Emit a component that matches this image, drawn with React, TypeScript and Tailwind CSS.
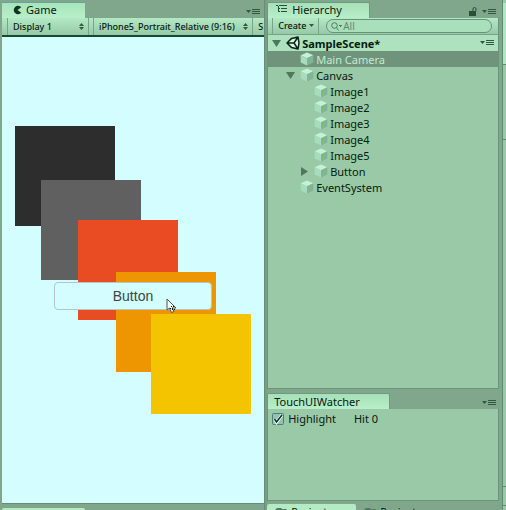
import React from "react";

const squares = [
  "left-[13px] top-[89px] bg-[#2d2d2d]",
  "left-[39px] top-[143px] bg-[#606060]",
  "left-[76px] top-[183px] bg-[#e94b22]",
  "left-[114px] top-[235px] bg-[#ee9502]",
  "left-[149px] top-[277px] bg-[#f5c400]",
];

function MenuIcon() {
  return (
    <svg width="14" height="8" viewBox="0 0 14 8" fill="#2f5a42" aria-hidden="true">
      <path d="M0 2h5L2.500 5zM6 1h8v1H6zM6 3h8v1H6zM6 5h8v1H6z" />
    </svg>
  );
}

function PaneMenu({ label }: { label: string }) {
  return (
    <button type="button" aria-label={label} className="flex h-2 w-3.5 items-center">
      <MenuIcon />
    </button>
  );
}

function GameIcon() {
  return (
    <svg width="9" height="10" viewBox="0 0 9 10" aria-hidden="true">
      <path d="M8.300 2.200A4.300 4.300 0 1 0 8.300 7.800L4.500 5z" fill="#12351f" />
    </svg>
  );
}

function HierarchyIcon() {
  return (
    <svg width="11" height="9" viewBox="0 0 11 9" fill="#24513a" aria-hidden="true">
      <path d="M0 0h2v1H0zM3 0h8v1H3zM2 3h2v1H2zM5 3h6v1H5zM2 6h2v1H2zM5 6h6v1H5zM2 1h1v6H2z" />
    </svg>
  );
}

function FolderIcon() {
  return (
    <svg width="12" height="10" viewBox="0 0 12 10" fill="#4f7c60" className="mt-1 shrink-0" aria-hidden="true">
      <path d="M0 2 2 0h4l1 1h4l1 1v8H0z" />
    </svg>
  );
}

function Cube() {
  return (
    <svg width="14" height="14" viewBox="0 0 14 14" className="shrink-0" aria-hidden="true">
      <path d="M7 .5 13.300 3.200 7 6.300.7 3.200z" fill="#c5f2d6" />
      <path d="M.7 3.200 7 6.300v7.200L.7 10.500z" fill="#a9dcbb" />
      <path d="M13.300 3.200 7 6.300v7.200l6.300-3z" fill="#80b593" />
    </svg>
  );
}

function UnityLogo() {
  return (
    <svg width="14" height="14" viewBox="0 0 14 14" className="shrink-0" aria-hidden="true">
      <path
        d="M12 .9 5.600 2.400 1 7l4.600 4.600L12 13.100 13 7zM1 7h7M8 7l4-6M8 7l4 6"
        fill="#d6f5e0"
        stroke="#092516"
        strokeWidth="1.500"
        strokeLinejoin="round"
      />
    </svg>
  );
}

function Arrow({ open }: { open: boolean }) {
  return (
    <svg width="9" height="9" viewBox="0 0 9 9" fill="#50775e" aria-hidden="true">
      <path d={open ? "M0 1h9L4.500 8z" : "M1 0v9l7-4.500z"} />
    </svg>
  );
}

function UpDown() {
  return (
    <svg width="5" height="7" viewBox="0 0 5 7" fill="#315a43" className="pointer-events-none absolute right-1 top-[5px]" aria-hidden="true">
      <path d="M0 3 2.500 0 5 3zM0 4h5L2.500 7z" />
    </svg>
  );
}

function Tree({ name, level, arrow, selected }: { name: string; level: number; arrow?: "open" | "closed"; selected?: boolean }) {
  return (
    <li className={`flex h-4 items-center ${level === 2 ? "pl-8" : "pl-[18px]"} ${selected ? "bg-[#6f947b] text-[#c3ead0]" : ""}`}>
      <span className="flex w-3.5 shrink-0">
        {arrow && (
          <button type="button" aria-label={`Toggle ${name}`} className="flex">
            <Arrow open={arrow === "open"} />
          </button>
        )}
      </span>
      <Cube />
      <span className="ml-0.5 pt-0.5">{name}</span>
    </li>
  );
}

const tab = "flex h-4 items-center rounded-t-xs border-x border-t border-[#6f9a7d] bg-linear-to-b from-[#a6dfb8] to-[#b8efca]";
const bar = "flex bg-linear-to-b from-[#b4e9c5] to-[#97c9a7]";

function GamePane() {
  return (
    <section aria-label="Game" className="flex min-w-0 flex-1 flex-col">
      <div className="flex h-[18px] shrink-0 items-end justify-between pr-1">
        <h2 className="flex h-4 w-[83px] items-center gap-1 border-t border-[#6d9fa4] bg-linear-to-b from-[#a6e5ba] to-[#b8efca] pb-0.5 pl-[11px]">
          <GameIcon />
          Game
        </h2>
        <div className="mb-0.5">
          <PaneMenu label="Game pane menu" />
        </div>
      </div>
      <div className={`${bar} h-[19px] shrink-0 border-b-2 border-[#164832] pl-[5px] text-[9px] font-medium`}>
        <div className="relative w-[82px] shrink-0 border-x border-[#78a587]">
          <select aria-label="Display" className="h-full w-full appearance-none bg-transparent pl-[5px] outline-none">
            <option>Display 1</option>
          </select>
          <UpDown />
        </div>
        <div className="relative ml-1 min-w-0 flex-1 border-x border-[#78a587]">
          <select aria-label="Aspect ratio" className="h-full w-full appearance-none bg-transparent pl-[5px] outline-none">
            <option>iPhone5_Portrait_Relative (9:16)</option>
          </select>
          <UpDown />
        </div>
        <div className="w-[11px] shrink-0 overflow-hidden pl-[5px] leading-[17px]">S</div>
      </div>
      <div className="relative flex-1 overflow-hidden border-b border-[#678e75] bg-[#d3fdfe]">
        {squares.map((place) => (
          <div key={place} className={`absolute size-[100px] ${place}`} />
        ))}
        <button
          type="button"
          className="absolute left-[52px] top-[245px] h-7 w-[158px] rounded-sm border border-[#b5c5c3] bg-[#d3fdfe] font-['Liberation_Sans',sans-serif] text-sm text-[#3c4645]"
        >
          Button
        </button>
        <svg width="11" height="16" viewBox="0 0 11 16" className="absolute left-[164px] top-[261px]" aria-hidden="true">
          <path d="M1 1v11l2.500-2 2 4.500 2.500-1L6 10h4z" fill="#f5fbfa" stroke="#4b5452" />
          <path d="M5 8h1v1H5zM7 8h1v1H7zM4 10h1v1H4zM6 10h1v2H6zM8 11h1v1H8z" fill="#111" />
        </svg>
      </div>
      <div className="flex h-1.5 shrink-0 items-end">
        <div className="h-0.5 w-[83px] rounded-t-xs bg-[#b4ebc5]" />
      </div>
    </section>
  );
}

function HierarchyPane() {
  return (
    <section aria-label="Hierarchy" className="flex min-h-0 flex-1 flex-col">
      <div className="flex h-[18px] shrink-0 items-end justify-between pr-[3px]">
        <h2 className={`${tab} w-[103px] gap-[5px] pb-0.5 pl-2`}>
          <HierarchyIcon />
          Hierarchy
        </h2>
        <div className="mb-0.5 flex items-center gap-1">
          <svg width="9" height="9" viewBox="0 0 9 9" aria-hidden="true">
            <path d="M0 4h7v5H0z" fill="#294f38" />
            <path d="M4 4V2a1.500 1.500 0 0 1 3 0v2" fill="none" stroke="#294f38" />
          </svg>
          <PaneMenu label="Hierarchy pane menu" />
        </div>
      </div>
      <div className="flex flex-1 flex-col border border-t-0 border-[#6b957a] bg-[#99c9a7]">
        <div className={`${bar} h-[17px] shrink-0 border-b border-[#77a487] pl-1`}>
          <button type="button" className="flex w-[47px] items-center justify-between border-x border-[#78a587] pl-[5px] pr-1 text-[9px] font-medium">
            Create
            <svg width="5" height="4" viewBox="0 0 5 4" fill="#315a43" aria-hidden="true"><path d="M0 0h5L2.500 3z" /></svg>
          </button>
          <label className="my-px ml-[7px] mr-1.5 flex min-w-0 flex-1 items-center rounded-full border border-[#66937a] bg-[#aadfbc] pl-1">
            <svg width="12" height="9" viewBox="0 0 12 9" className="shrink-0" fill="none" stroke="#4c7a5e" aria-hidden="true">
              <circle cx="3.500" cy="3.500" r="2.800" />
              <path d="m5.500 5.500 2 3M8 3.500h3M9 4.500h1" />
            </svg>
            <input aria-label="Search hierarchy" placeholder="All" className="w-full min-w-0 bg-transparent text-[10px] leading-3 outline-none placeholder:text-[#638a70]" />
          </label>
        </div>
        <div className="flex h-4 shrink-0 items-center bg-[#aee2bf] pl-1 pr-1 font-bold">
          <button type="button" aria-label="Toggle SampleScene" className="mr-[5px] flex"><Arrow open /></button>
          <UnityLogo />
          <span className="ml-0.5 flex-1 pt-0.5 text-[#04200f]">SampleScene*</span>
          <PaneMenu label="Scene menu" />
        </div>
        <ul>
          <Tree name="Main Camera" level={1} selected />
          <Tree name="Canvas" level={1} arrow="open" />
          <Tree name="Image1" level={2} />
          <Tree name="Image2" level={2} />
          <Tree name="Image3" level={2} />
          <Tree name="Image4" level={2} />
          <Tree name="Image5" level={2} />
          <Tree name="Button" level={2} arrow="closed" />
          <Tree name="EventSystem" level={1} />
        </ul>
      </div>
    </section>
  );
}

function WatcherPane() {
  return (
    <section aria-label="TouchUIWatcher" className="flex shrink-0 flex-col">
      <div className="flex h-5 items-end justify-between pr-[3px]">
        <h2 className={`${tab} w-[123px] pl-1.5`}>TouchUIWatcher</h2>
        <div className="mb-0.5">
          <PaneMenu label="TouchUIWatcher pane menu" />
        </div>
      </div>
      <div className="flex h-[92px] items-start border border-t-0 border-[#6b957a] bg-[#99c9a7] pl-1 pt-0.5">
        <label className="flex h-4 items-center gap-1">
          <input type="checkbox" defaultChecked className="peer sr-only" />
          <svg width="12" height="12" viewBox="0 0 12 12" aria-hidden="true">
            <rect x=".5" y=".5" width="11" height="11" rx="1" fill="#8fc2b7" stroke="#507e6c" />
            <path d="m2.500 6 2 3.500L10 2" fill="none" stroke="#e5fff3" strokeWidth="3" />
            <path d="m2.500 6 2 3L10 2" fill="none" stroke="#102c20" strokeWidth="1.500" />
          </svg>
          Highlight
        </label>
        <output className="ml-[18px] leading-4">Hit 0</output>
      </div>
    </section>
  );
}

export default function App() {
  return (
    <main className="flex h-screen overflow-hidden bg-[#80a68b] pl-0.5 font-['Noto_Sans',sans-serif] text-[11px] leading-4 text-[#04200f]">
      <GamePane />
      <div className="w-[3px] shrink-0 border-l border-[#678e75] bg-[#789e84]" />
      <div className="flex min-w-0 flex-[0_0_46%] flex-col">
        <HierarchyPane />
        <WatcherPane />
        <div className="mt-[3px] flex h-1.5 shrink-0 overflow-hidden">
          <div className="flex h-4 w-[89px] items-start gap-1 rounded-t-xs bg-[#b4ebc5] pl-2">
            <FolderIcon />
            Project
          </div>
          <div className="flex h-4 items-start gap-1 pl-2">
            <FolderIcon />
            Project
          </div>
        </div>
      </div>
      <div className="ml-[3px] flex w-1 shrink-0 flex-col border-l border-[#5f8b70] bg-[#99c9a7]">
        <div className="mt-[3px] h-[62px] shrink-0 border-b border-[#5f8b70] bg-[#b0e6c1]" />
        <div className="h-[75px] shrink-0 border-b border-[#5f8b70]" />
        <div className="flex-1 border-b border-[#5f8b70]" />
        <div className="h-[19px] shrink-0 border-b border-[#5f8b70]" />
        <div className="h-1 shrink-0" />
      </div>
    </main>
  );
}
